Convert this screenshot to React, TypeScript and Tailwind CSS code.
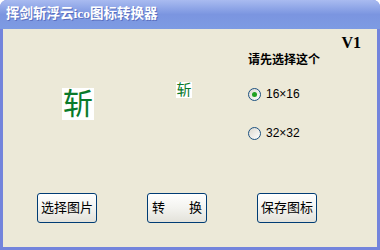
import React, { useState } from "react";

const cjk = "font-['Liberation_Serif','Noto_Sans_CJK_SC',serif]";
const sans = "font-['Liberation_Sans','Noto_Sans_CJK_SC',sans-serif]";

function Radio({ checked, label, onClick }: { checked: boolean; label: string; onClick: () => void }) {
  return (
    <div className="flex items-center gap-[5px] cursor-default" onClick={onClick}>
      <div className="w-[13px] h-[13px] rounded-full border border-[#1c5180] bg-gradient-to-br from-[#dcd9d0] to-[#ffffff] flex items-center justify-center">
        {checked && <div className="w-[5px] h-[5px] rounded-full bg-[#21a121]" />}
      </div>
      <span className={`${sans} text-[12px] leading-[14px] text-black`}>{label}</span>
    </div>
  );
}

function XpButton({ children, wide }: { children: React.ReactNode; wide?: boolean }) {
  return (
    <button
      className={`w-[60px] h-[30px] rounded-[3px] border border-[#003c74] bg-gradient-to-b from-[#ffffff] via-[#f3f3ef] to-[#e3e2da] ${sans} text-[13px] text-black flex items-center ${wide ? "justify-between px-[4px]" : "justify-center"}`}
    >
      {children}
    </button>
  );
}

export default function App() {
  const [size, setSize] = useState(16);

  return (
    <div className="w-[380px] h-[250px] flex flex-col bg-[#7384dc] rounded-t-[7px] overflow-hidden">
      {/* Title bar */}
      <div className="h-[29px] shrink-0 flex items-center pl-[6px] bg-gradient-to-b from-[#a9bbf0] via-[#7b95e0] to-[#7d9be3]">
        <span className={`${cjk} text-[13.5px] font-bold text-white [text-shadow:1px_1px_0_#5a6fbe]`}>
          挥剑斩浮云ico图标转换器
        </span>
      </div>

      {/* Client area */}
      <div className="flex-1 mx-[3px] mb-[3px] bg-[#ece9d8] flex flex-col">
        <div className="flex justify-end pr-[16px] pt-[5px] h-[24px]">
          <span className="font-['Liberation_Serif',serif] font-bold text-[16px] leading-[18px] text-black">V1</span>
        </div>

        <div className="flex items-start">
          <div className="ml-[59px] mt-[35px] w-[32px] h-[32px] bg-white flex items-center justify-center">
            <span className={`${sans} text-[30px] leading-[32px] text-[#0a7a2a]`}>斩</span>
          </div>
          <div className="ml-[82px] mt-[29px] w-[16px] h-[16px] bg-white flex items-center justify-center">
            <span className={`${sans} text-[15px] leading-[16px] text-[#0a7a2a]`}>斩</span>
          </div>
          <div className="ml-[56px] flex flex-col">
            <span className={`${sans} text-[12px] font-bold leading-[14px] text-black`}>请先选择这个</span>
            <div className="mt-[20px]">
              <Radio checked={size === 16} label="16×16" onClick={() => setSize(16)} />
            </div>
            <div className="mt-[25px]">
              <Radio checked={size === 32} label="32×32" onClick={() => setSize(32)} />
            </div>
          </div>
        </div>

        <div className="flex-1" />

        <div className="flex pl-[34px] gap-[50px] pb-[24px]">
          <XpButton>选择图片</XpButton>
          <XpButton wide>
            <span>转</span>
            <span>换</span>
          </XpButton>
          <XpButton>保存图标</XpButton>
        </div>
      </div>
    </div>
  );
}
